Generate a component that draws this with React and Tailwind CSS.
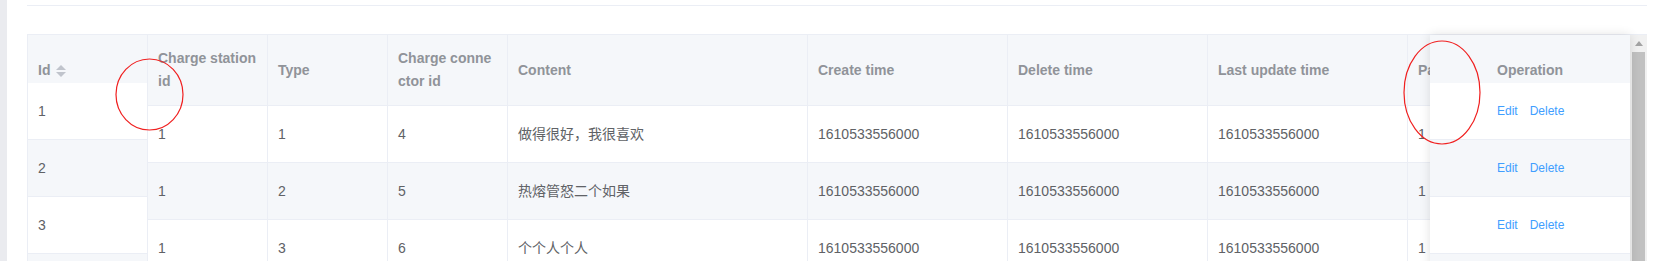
import React from "react";

const font = { fontFamily: '"Liberation Sans", "Noto Sans CJK SC", Arial, sans-serif' };

const columns = [
    { key: "id", label: "Id", w: "w-[120px]" },
    { key: "station", label: "Charge station id", w: "w-[120px]" },
    { key: "type", label: "Type", w: "w-[120px]" },
    { key: "conn", label: "Charge connector id", w: "w-[120px]" },
    { key: "content", label: "Content", w: "w-[300px]" },
    { key: "create", label: "Create time", w: "w-[200px]" },
    { key: "del", label: "Delete time", w: "w-[200px]" },
    { key: "upd", label: "Last update time", w: "w-[200px]" },
    { key: "parent", label: "Parent id", w: "w-[200px]" },
];

const rows = [
    { id: 1, station: 1, type: 1, conn: 4, content: "做得很好，我很喜欢", create: "1610533556000", del: "1610533556000", upd: "1610533556000", parent: 1 },
    { id: 2, station: 1, type: 2, conn: 5, content: "热熔管怒二个如果", create: "1610533556000", del: "1610533556000", upd: "1610533556000", parent: 1 },
    { id: 3, station: 1, type: 3, conn: 6, content: "个个人个人", create: "1610533556000", del: "1610533556000", upd: "1610533556000", parent: 1 },
];

function SortCaret() {
    return (
        <svg width="10" height="12" viewBox="0 0 10 12" className="ml-[6px]">
            <polygon points="0,5 5,0 10,5" fill="#c0c4cc" />
            <polygon points="0,7 5,12 10,7" fill="#c0c4cc" />
        </svg>
    );
}

function OpButtons() {
    return (
        <div className="flex gap-[12px] text-[12px] text-[#409eff]">
            <span>Edit</span>
            <span>Delete</span>
        </div>
    );
}

export default function App() {
    return (
        <div className="relative flex h-[261px] w-[1663px] overflow-hidden bg-white" style={font}>
            {/* left page edge */}
            <div className="w-[7px] shrink-0 bg-[#eaebef]" />

            <div className="min-w-0 flex-1 pl-[20px] pr-[16px]">
                <div className="mt-[5px] h-px bg-[#ebeef5]" />

                {/* table */}
                <div className="relative mt-[28px] flex border-l border-t border-[#ebeef5]">
                    {/* main body */}
                    <div className="min-w-0 flex-1 overflow-hidden">
                        <div className="flex h-[71px] border-b border-[#ebeef5] bg-[#f5f7fa] text-[14px] font-bold leading-[23px] text-[#909399]">
                            {columns.map((c) => (
                                <div key={c.key} className={`${c.w} flex shrink-0 items-center break-all border-r border-[#ebeef5] px-[10px]`}>
                                    {c.label}
                                </div>
                            ))}
                        </div>
                        {rows.map((r, i) => (
                            <div
                                key={r.id}
                                className={`flex h-[57px] border-b border-[#ebeef5] text-[14px] text-[#606266] ${i % 2 === 1 ? "bg-[#f5f7fa]" : "bg-white"}`}
                            >
                                {columns.map((c) => (
                                    <div key={c.key} className={`${c.w} flex shrink-0 items-center border-r border-[#ebeef5] px-[10px]`}>
                                        {r[c.key]}
                                    </div>
                                ))}
                            </div>
                        ))}
                    </div>

                    {/* vertical scrollbar */}
                    <div className="flex w-[17px] shrink-0 flex-col bg-[#f1f1f1]">
                        <div className="flex h-[17px] items-center justify-center">
                            <svg width="8" height="5" viewBox="0 0 8 5">
                                <polygon points="0,5 4,0 8,5" fill="#a3a3a3" />
                            </svg>
                        </div>
                        <div className="mx-[2px] h-[300px] bg-[#c1c1c1]" />
                    </div>

                    {/* fixed left column */}
                    <div className="absolute left-0 top-0 w-[120px] border-r border-[#ebeef5] bg-white">
                        <div className="h-[48px] bg-[#f5f7fa] pl-[10px] pt-[24px]">
                            <div className="flex items-center text-[14px] font-bold leading-[23px] text-[#909399]">
                                Id
                                <SortCaret />
                            </div>
                        </div>
                        {rows.map((r, i) => (
                            <div
                                key={r.id}
                                className={`flex h-[57px] items-center border-b border-[#ebeef5] px-[10px] text-[14px] text-[#606266] ${i % 2 === 1 ? "bg-[#f5f7fa]" : "bg-white"}`}
                            >
                                {r.id}
                            </div>
                        ))}
                        <div className="h-[57px] bg-[#f5f7fa]" />
                    </div>

                    {/* fixed right column */}
                    <div className="absolute right-[17px] top-0 w-[200px] bg-white shadow-[0_0_10px_rgba(0,0,0,0.12)]">
                        <div className="h-[48px] bg-[#f5f7fa] pl-[67px] pt-[24px] text-[14px] font-bold leading-[23px] text-[#909399]">
                            Operation
                        </div>
                        {rows.map((r, i) => (
                            <div
                                key={r.id}
                                className={`flex h-[57px] items-center border-b border-[#ebeef5] pl-[67px] ${i % 2 === 1 ? "bg-[#f5f7fa]" : "bg-white"}`}
                            >
                                <OpButtons />
                            </div>
                        ))}
                        <div className="h-[57px] bg-[#f5f7fa]" />
                    </div>
                </div>
            </div>

            {/* red annotation marks */}
            <svg className="pointer-events-none absolute left-0 top-0" width="1663" height="261">
                <ellipse cx="149.5" cy="94.5" rx="33.5" ry="35.5" fill="none" stroke="#f02020" strokeWidth="1.2" />
                <ellipse cx="1442" cy="92.5" rx="38" ry="51.5" fill="none" stroke="#f02020" strokeWidth="1.2" />
            </svg>
        </div>
    );
}
